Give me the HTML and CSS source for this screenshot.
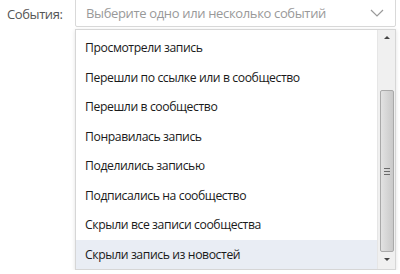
FILE: index.html
```html
<!doctype html>
<html lang="ru">
<head>
  <meta charset="UTF-8">
  <title>События</title>
  <link rel="stylesheet" href="styles.css">
</head>
<body>
  <div class="row">
    <label class="label">События:</label>
    <div class="field">
      <div class="select">
        <span class="placeholder">Выберите одно или несколько событий</span>
        <svg class="chevron" width="14" height="8" viewBox="0 0 14 8"><path d="M1 1l6 6 6-6" fill="none" stroke="#9a9a9a" stroke-width="1.2"/></svg>
      </div>
      <div class="dropdown">
        <ul class="options">
          <li>Просмотрели запись</li>
          <li>Перешли по ссылке или в сообщество</li>
          <li>Перешли в сообщество</li>
          <li>Понравилась запись</li>
          <li>Поделились записью</li>
          <li>Подписались на сообщество</li>
          <li>Скрыли все записи сообщества</li>
          <li class="active">Скрыли запись из новостей</li>
        </ul>
        <div class="scrollbar">
          <span class="arrow up"></span>
          <div class="thumb"><span class="grip"></span></div>
          <span class="arrow down"></span>
        </div>
      </div>
    </div>
  </div>
</body>
</html>
```

FILE: styles.css
```css
body{
  margin: 0;
  background: #fff;
  font-family: "Open Sans", "Noto Sans", sans-serif;
  font-size: 13px;
  color: #222;
}

.row{
  display: flex;
  align-items: flex-start;
}

.label{
  width: 75px;
  padding-left: 7px;
  box-sizing: border-box;
  line-height: 28px;
  color: #555;
  letter-spacing: -0.4px;
}

.field{
  display: flex;
  flex-direction: column;
  gap: 2px;
  width: 321px;
}

.select{
  display: flex;
  align-items: center;
  justify-content: space-between;
  height: 28px;
  margin-top: -1px;
  padding: 0 11px 0 10px;
  border: 1px solid #d9d9d9;
  border-radius: 0 0 2px 2px;
  box-sizing: border-box;
}

.placeholder{
  color: #999;
  letter-spacing: -0.35px;
}

.dropdown{
  height: 241px;
  display: flex;
  background: #fff;
  border: 1px solid #d6d6d6;
  box-sizing: border-box;
  box-shadow: 0 1px 4px rgba(0,0,0,0.12);
}

.options{
  flex: 1;
  list-style: none;
  margin: 0;
  padding: 3px 0 0;
}

.options li{
  height: 29.5px;
  line-height: 29.5px;
  padding-left: 9px;
  white-space: nowrap;
  font-size: 12.2px;
  letter-spacing: -0.4px;
  color: #1a1a1a;
}

.options li.active{
  background: #e9edf4;
}

.scrollbar{
  width: 17px;
  display: flex;
  flex-direction: column;
  align-items: center;
  background: #f0f0f0;
  border-left: 1px solid #e6e6e6;
}

.arrow{
  width: 0;
  height: 0;
  border-left: 3px solid transparent;
  border-right: 3px solid transparent;
}

.arrow.up{
  margin: 6px 0 51px;
  border-bottom: 3px solid #444;
}

.arrow.down{
  margin: 6px 0 0;
  border-top: 3px solid #444;
}

.thumb{
  width: 14px;
  height: 162px;
  display: flex;
  align-items: center;
  justify-content: center;
  border: 1px solid #a9a9a9;
  border-radius: 2px;
  box-sizing: border-box;
  background: linear-gradient(to right, #e2e2e2, #d3d3d3 60%, #c9c9c9);
}

.grip{
  width: 6px;
  height: 7px;
  background: repeating-linear-gradient(to bottom, #6a6a6a 0 1px, transparent 1px 3px);
}
```
